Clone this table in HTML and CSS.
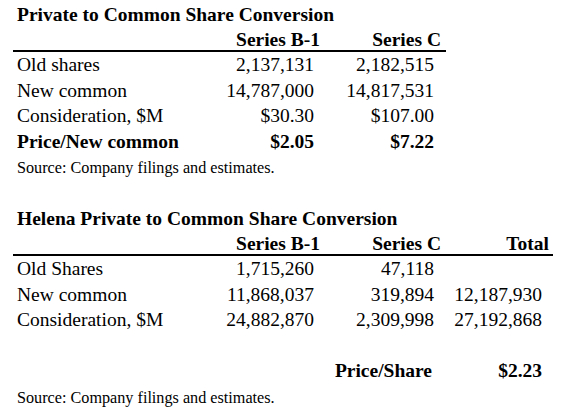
FILE: index.html
```html
<!DOCTYPE html>
<html lang="en">
<head>
    <meta charset="UTF-8">
    <meta name="viewport" content="width=device-width, initial-scale=1.0">
    <title>Share Conversion</title>
    <link rel="stylesheet" href="styles.css">
</head>
<body>
    <div class="sheet">
        <section class="block">
            <h2 class="title">Private to Common Share Conversion</h2>
            <table class="conv">
                <colgroup>
                    <col class="col-label">
                    <col class="col-b1">
                    <col class="col-c">
                </colgroup>
                <thead>
                    <tr>
                        <th></th>
                        <th>Series B-1</th>
                        <th>Series C</th>
                    </tr>
                </thead>
                <tbody>
                    <tr>
                        <td class="label">Old shares</td>
                        <td>2,137,131</td>
                        <td>2,182,515</td>
                    </tr>
                    <tr>
                        <td class="label">New common</td>
                        <td>14,787,000</td>
                        <td>14,817,531</td>
                    </tr>
                    <tr>
                        <td class="label">Consideration, $M</td>
                        <td>$30.30</td>
                        <td>$107.00</td>
                    </tr>
                    <tr class="strong">
                        <td class="label">Price/New common</td>
                        <td>$2.05</td>
                        <td>$7.22</td>
                    </tr>
                </tbody>
            </table>
            <p class="source">Source: Company filings and estimates.</p>
        </section>

        <section class="block">
            <h2 class="title">Helena Private to Common Share Conversion</h2>
            <table class="conv conv-wide">
                <colgroup>
                    <col class="col-label">
                    <col class="col-b1">
                    <col class="col-c">
                    <col class="col-total">
                </colgroup>
                <thead>
                    <tr>
                        <th></th>
                        <th>Series B-1</th>
                        <th>Series C</th>
                        <th class="total">Total</th>
                    </tr>
                </thead>
                <tbody>
                    <tr>
                        <td class="label">Old Shares</td>
                        <td>1,715,260</td>
                        <td>47,118</td>
                        <td></td>
                    </tr>
                    <tr>
                        <td class="label">New common</td>
                        <td>11,868,037</td>
                        <td>319,894</td>
                        <td>12,187,930</td>
                    </tr>
                    <tr>
                        <td class="label">Consideration, $M</td>
                        <td>24,882,870</td>
                        <td>2,309,998</td>
                        <td>27,192,868</td>
                    </tr>
                    <tr class="spacer">
                        <td colspan="4"></td>
                    </tr>
                    <tr class="strong">
                        <td class="label"></td>
                        <td></td>
                        <td class="price-label">Price/Share</td>
                        <td>$2.23</td>
                    </tr>
                </tbody>
            </table>
            <p class="source">Source: Company filings and estimates.</p>
        </section>
    </div>
</body>
</html>
```

FILE: styles.css
```css
body {
    margin: 0;
    background: #fff;
    color: #000;
    font-family: "Liberation Serif", "Times New Roman", serif;
    font-size: 19.5px;
}

.sheet {
    padding-top: 2px;
}

.block + .block {
    margin-top: 24px;
}

.title {
    margin: 0;
    padding-left: 17px;
    font-size: 19.5px;
    font-weight: bold;
    line-height: 26px;
}

.conv {
    margin-left: 13px;
    border-collapse: collapse;
    table-layout: fixed;
    width: 433px;
}

.conv-wide {
    width: 540px;
}

.col-label {
    width: 200px;
}

.col-b1 {
    width: 112px;
}

.col-c {
    width: 121px;
}

.col-total {
    width: 107px;
}

th {
    padding: 1px 5px 0 0;
    line-height: 21px;
    text-align: right;
    font-weight: bold;
    border-bottom: 2px solid #000;
    white-space: nowrap;
}

th.total {
    padding-right: 4px;
}

td {
    padding: 0 11px 0 0;
    line-height: 25.6px;
    height: 25.6px;
    text-align: right;
    white-space: nowrap;
}

td:nth-child(3) {
    padding-right: 12px;
}

td.label {
    padding-left: 4px;
    text-align: left;
}

td.price-label {
    padding-right: 14px;
}

.strong td {
    font-weight: bold;
}

.source {
    margin: 0;
    padding: 2px 0 0 17px;
    font-size: 16.2px;
    line-height: 25.6px;
}
```
